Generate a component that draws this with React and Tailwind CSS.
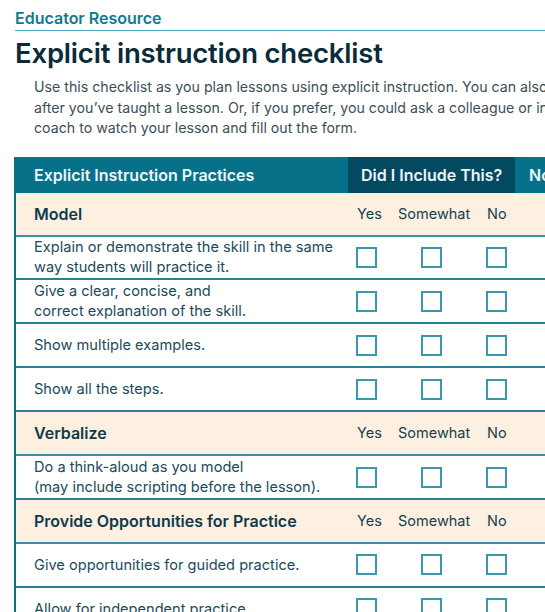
const sections = [
  {
    title: "Model",
    items: [
      ["Explain or demonstrate the skill in the same", "way students will practice it."],
      ["Give a clear, concise, and", "correct explanation of the skill."],
      ["Show multiple examples."],
      ["Show all the steps."],
    ],
  },
  {
    title: "Verbalize",
    items: [["Do a think-aloud as you model", "(may include scripting before the lesson)."]],
  },
  {
    title: "Provide Opportunities for Practice",
    items: [["Give opportunities for guided practice."], ["Allow for independent practice."]],
  },
];

const Box = () => (
  <span className="block w-[21px] h-[21px] border-2 border-[#3b97ab] bg-white" />
);

const SectionRow = ({ title }) => (
  <div className="flex h-[44px] items-center bg-[#fdf0e1] border-b-2 border-[#3f8ea2]">
    <div className="w-[332px] pl-[18px] text-[16px] font-semibold text-[#0d3b4c]">{title}</div>
    <div className="flex w-[167px] pl-[9px] text-[14.5px] text-[#143f4f]">
      <span className="w-[41px]">Yes</span>
      <span className="w-[89px]">Somewhat</span>
      <span>No</span>
    </div>
  </div>
);

const ItemRow = ({ lines }) => (
  <div className="flex h-[43.9px] items-center border-b-2 border-[#2b7f94] bg-white">
    <div className="w-[332px] pl-[18px] text-[14.6px] leading-[20px] text-[#1b4a5a]">
      {lines.map((l) => (
        <div key={l} className="whitespace-nowrap">{l}</div>
      ))}
    </div>
    <div className="flex w-[167px] pl-[8px] gap-[44px]">
      <Box />
      <Box />
      <Box />
    </div>
  </div>
);

export default function App() {
  return (
    <div className="h-screen w-full overflow-hidden bg-white font-['Inter',sans-serif]">
      <div className="w-[760px] pt-[7px]">
        <div className="ml-[15px] border-b-[1.5px] border-[#45abc6] pb-[1px] text-[16px] font-semibold leading-[22px] text-[#137a8c]">
          Educator Resource
        </div>
        <h1 className="ml-[15px] mt-[4px] text-[27.5px] font-semibold leading-[36px] tracking-[-0.2px] text-[#0a2b38]">
          Explicit instruction checklist
        </h1>
        <div className="ml-[34px] mt-[6px] text-[14.2px] leading-[20.5px] text-[#3c4e57]">
          <div className="whitespace-nowrap">
            Use this checklist as you plan lessons using explicit instruction. You can also use it
          </div>
          <div className="whitespace-nowrap">
            after you’ve taught a lesson. Or, if you prefer, you could ask a colleague or instructional
          </div>
          <div className="whitespace-nowrap">coach to watch your lesson and fill out the form.</div>
        </div>

        <div className="ml-[14px] mt-[18px] border-l-2 border-[#0b6e86]">
          <div className="flex h-[36px] items-stretch bg-[#07718a] text-[16px] font-semibold text-[#eef5f6]">
            <div className="flex w-[332px] items-center pl-[18px]">Explicit Instruction Practices</div>
            <div className="flex w-[167px] items-center bg-[#034960] pl-[13px]">Did I Include This?</div>
            <div className="flex items-center pl-[14px]">Notes</div>
          </div>
          {sections.map((s) => (
            <div key={s.title}>
              <SectionRow title={s.title} />
              {s.items.map((lines) => (
                <ItemRow key={lines[0]} lines={lines} />
              ))}
            </div>
          ))}
        </div>
      </div>
    </div>
  );
}
